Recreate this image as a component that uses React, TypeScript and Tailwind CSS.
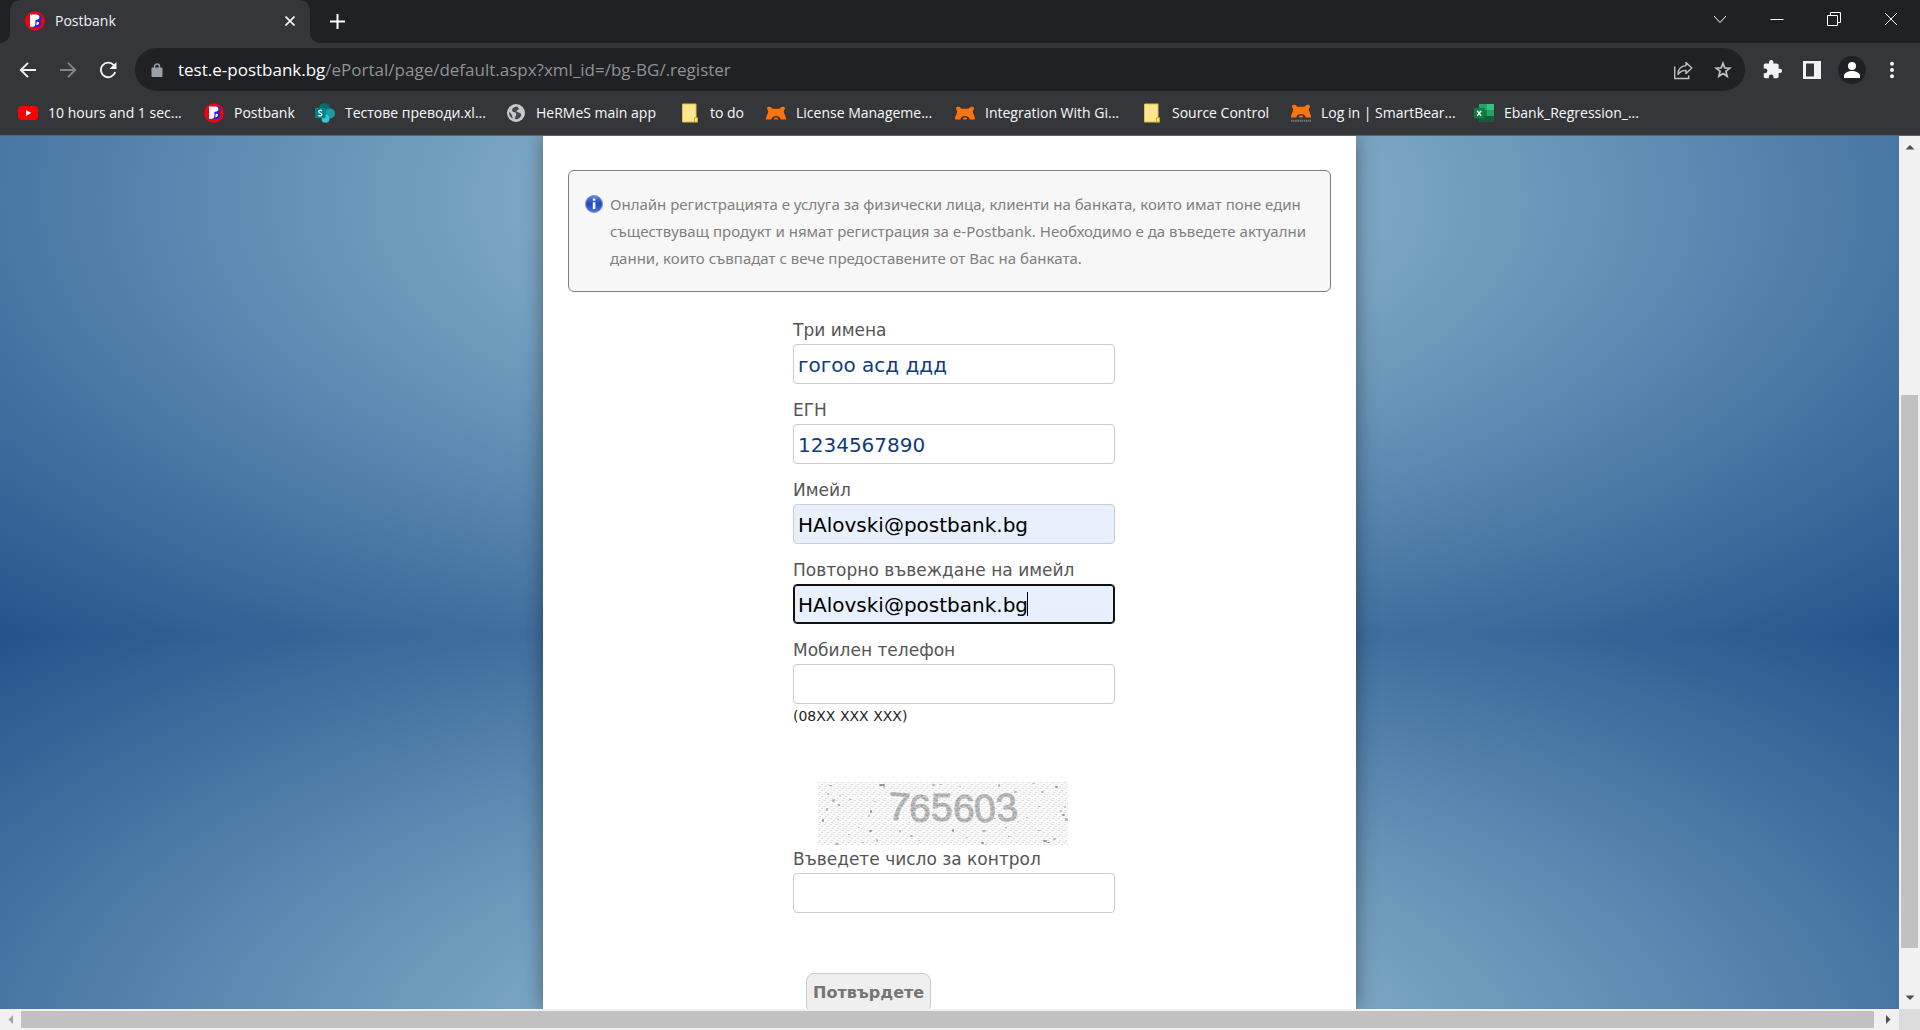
import type { ReactNode } from "react";

function PostbankIcon() {
  return (
    <svg viewBox="0 0 20 20" className="size-5 shrink-0" aria-hidden="true">
      <circle cx="10" cy="10" r="9.8" fill="#f5000c" />
      <path d="M5 3.500h8c4 0 5 4 2.300 6 2 2 .8 6.500-2.300 6.500H5z" fill="#2a24d4" />
      <path d="M5 3.600h6.600c3.400 0 3.800 4.400.9 4.900l-2.100.5v3.400c0 1.600-.8 3.400-2.200 3.400H5z" fill="#fff" />
      <path d="M11.800 10.800c2-.4 2.500.8 2 2-.4 1-1.400 1.500-2.500 1.400z" fill="#fff" />
    </svg>
  );
}

function YoutubeIcon() {
  return (
    <svg viewBox="0 0 20 20" className="size-5 shrink-0" aria-hidden="true">
      <rect x="0" y="3" width="20" height="14" rx="3.500" fill="#f00" />
      <path d="M8 7v6l5.200-3z" fill="#fff" />
    </svg>
  );
}

function SharepointIcon() {
  return (
    <svg viewBox="0 0 20 20" className="size-5 shrink-0" aria-hidden="true">
      <circle cx="9.500" cy="5.500" r="5.500" fill="#036c70" />
      <circle cx="15" cy="10.500" r="5" fill="#1a9ba1" />
      <circle cx="10.500" cy="15.800" r="4" fill="#37c6d0" />
      <rect x="0" y="4.800" width="10.500" height="10.500" rx="1" fill="#038387" />
      <path d="M7 7.700C5.800 7 3.700 7.100 3.700 8.600c0 1.700 3.200 1.200 3.200 2.900 0 1.600-2.200 1.700-3.500.9" fill="none" stroke="#fff" strokeWidth="1.300" />
    </svg>
  );
}

function GlobeIcon() {
  return (
    <svg viewBox="0 0 20 20" className="size-5 shrink-0" aria-hidden="true">
      <circle cx="10" cy="10" r="9" fill="#c6c9cd" />
      <path
        d="M11 3.500c-3 .3-5 1.800-5 3.500 0 1.600 1.400 2 2.800 2.300 1.600.4 1.700 2.200 1.100 3.200-.5 1-.6 2.600-1.300 3.600 3.400.6 6.300-1.600 6.700-4.700-.9-2-3.300-1.700-4.500-2.700-.9-.9.700-1.300 1.500-1.900 1-.8.200-2.700-1.300-3.300zM3.100 8.600c-.4 3.400 1.200 6 3.600 7-.2-1.600-.3-3-1.200-4.200-.8-1-2-1.500-2.400-2.800z"
        fill="#45474b"
      />
    </svg>
  );
}

function NoteIcon() {
  return (
    <svg viewBox="0 0 20 20" className="size-5 shrink-0" aria-hidden="true">
      <path d="M2.500 1h13.500v14l1.500 4h-15z" fill="#ffe68f" stroke="#e3bf4a" />
      <path d="M14.500 18.800v-4h3v4z" fill="#ffe68f" stroke="#d4a92c" />
    </svg>
  );
}

function BearIcon({ captioned = false }: { captioned?: boolean }) {
  return (
    <svg viewBox="0 0 20 20" className="size-5 shrink-0" aria-hidden="true">
      <g transform={captioned ? "translate(0 -2)" : undefined}>
        <path
          d="M1 5.200C1.400 3.600 4 3.300 5 4.300c.5.500.8 1.300 1.700 1.400 2.200.2 4.400.2 6.600 0 .9-.1 1.200-.9 1.700-1.400 1-1 3.600-.7 4 .9.200 1-.9 1.700-1.100 2.500-.2 1.500.3 2.600.8 3.900.6 1.600 1.300 2.900 1.300 4.900h-5.200c-.6-2.300-2.300-3.500-4.800-3.500s-4.200 1.200-4.800 3.500H0c0-2 .7-3.300 1.300-4.900.5-1.300 1-2.400.8-3.900C1.900 6.900.8 6.200 1 5.200z"
          fill="#ff730b"
        />
        <path d="M7.800 15.200c.5-1 3.900-1 4.400 0l-.8 1.300H8.600z" fill="#ff730b" />
      </g>
      {captioned && <path d="M0 17.800h20" stroke="#77777a" strokeWidth="2" strokeDasharray="1.500 .6" />}
    </svg>
  );
}

function ExcelIcon() {
  return (
    <svg viewBox="0 0 20 20" className="size-5 shrink-0" aria-hidden="true">
      <path d="M5 1h7.500v6H5z" fill="#21a366" />
      <path d="M12.500 1H20v6h-7.500z" fill="#33c481" />
      <path d="M5 7h7.500v6H5z" fill="#107c41" />
      <path d="M12.500 7H20v6h-7.500z" fill="#21a366" />
      <path d="M5 13h15v6H5z" fill="#185c37" />
      <rect x="0" y="5" width="10.500" height="10.500" rx="1" fill="#107c41" />
      <path d="M3.200 7.700l4 5.200M7.200 7.700l-4 5.200" stroke="#fff" strokeWidth="1.400" />
    </svg>
  );
}

function BackIcon() {
  return (
    <svg viewBox="0 0 18 18" className="size-[18px]" fill="none" stroke="currentColor" strokeWidth="1.900" aria-hidden="true">
      <path d="M17 9H2M9 1.800L1.800 9 9 16.200" />
    </svg>
  );
}

function ForwardIcon() {
  return (
    <svg viewBox="0 0 18 18" className="size-[18px]" fill="none" stroke="currentColor" strokeWidth="1.900" aria-hidden="true">
      <path d="M1 9h15M9 1.800L16.200 9 9 16.200" />
    </svg>
  );
}

function ReloadIcon() {
  return (
    <svg viewBox="0 0 18 18" className="size-[18px]" aria-hidden="true">
      <path d="M14.800 4.200A7.300 7.300 0 1 0 16.200 11" fill="none" stroke="currentColor" strokeWidth="1.900" />
      <path d="M17.500 1v7H10.500z" fill="currentColor" />
    </svg>
  );
}

function LockIcon() {
  return (
    <svg viewBox="0 0 20 20" className="size-5 shrink-0 text-[#9aa0a6]" aria-hidden="true">
      <rect x="4.500" y="7.500" width="11" height="9.500" rx="1" fill="currentColor" />
      <path d="M7.500 8V6.500a2.500 2.500 0 0 1 5 0V8" fill="none" stroke="currentColor" strokeWidth="1.400" />
    </svg>
  );
}

function ShareIcon() {
  return (
    <svg viewBox="0 0 20 20" className="size-5" fill="none" stroke="currentColor" strokeWidth="1.400" aria-hidden="true">
      <path d="M1.700 6.500v12h14v-3" />
      <path d="M5 14.500c.2-5.500 3-8.600 8-8.900V2.400l5.800 5.600-5.800 5.600v-3.200c-3.700 0-6 1.200-8 4.100z" strokeLinejoin="round" />
    </svg>
  );
}

function StarIcon() {
  return (
    <svg viewBox="0 0 18 18" className="size-[18px]" fill="none" stroke="currentColor" strokeWidth="1.700" aria-hidden="true">
      <path d="M9 2.200l1.800 4.700 5 .3-3.900 3.200 1.300 4.900L9 12.500l-4.200 2.800 1.300-4.900-3.900-3.200 5-.3z" />
    </svg>
  );
}

function PuzzleIcon() {
  return (
    <svg viewBox="0 0 24 24" className="size-[21px]" fill="currentColor" aria-hidden="true">
      <path d="M20.500 11H19V7c0-1.100-.9-2-2-2h-4V3.500a2.500 2.500 0 0 0-5 0V5H4c-1.100 0-2 .9-2 2v3.800h1.500a2.700 2.700 0 0 1 0 5.400H2V20c0 1.100.9 2 2 2h3.800v-1.500a2.700 2.700 0 0 1 5.400 0V22H17c1.100 0 2-.9 2-2v-4h1.500a2.500 2.500 0 0 0 0-5z" />
    </svg>
  );
}

function SidePanelIcon() {
  return (
    <svg viewBox="0 0 18 18" className="size-[18px]" fill="currentColor" aria-hidden="true">
      <path fillRule="evenodd" d="M0 0h18v18H0zM3 2.500v13h8v-13z" />
    </svg>
  );
}

function ProfileIcon() {
  return (
    <svg viewBox="0 0 28 28" className="size-7" aria-hidden="true">
      <circle cx="14" cy="14" r="14" fill="#202124" />
      <circle cx="14" cy="10" r="4" fill="#fff" />
      <path d="M6 22v-2.500C6 16.800 10.500 15 14 15s8 1.800 8 4.500V22z" fill="#fff" />
    </svg>
  );
}

function MenuDotsIcon() {
  return (
    <svg viewBox="0 0 18 18" className="size-[18px]" fill="currentColor" aria-hidden="true">
      <circle cx="9" cy="2.800" r="2" />
      <circle cx="9" cy="9" r="2" />
      <circle cx="9" cy="15.200" r="2" />
    </svg>
  );
}

function InfoIcon() {
  return (
    <svg viewBox="0 0 18 18" className="mt-1 size-[18px] shrink-0" aria-hidden="true">
      <defs>
        <linearGradient id="info-fill" x1="0" y1="0" x2="0" y2="1">
          <stop offset="0" stopColor="#5c82e0" />
          <stop offset=".5" stopColor="#2349b8" />
          <stop offset="1" stopColor="#4a74ea" />
        </linearGradient>
      </defs>
      <circle cx="9" cy="9" r="8.500" fill="url(#info-fill)" stroke="#7c95dd" />
      <path d="M7.800 3.500h2.600v2.300H7.800zM7.800 7.200h2.600V14H7.800z" fill="#fff" />
    </svg>
  );
}

const SPECKS: [number, number, number, number][] = [
  [11, 3, 3, 1], [9, 11, 2, 2], [14, 17, 3, 3], [20, 22, 2, 2], [21, 13, 2, 1], [8, 26, 2, 3], [4, 37, 2, 3], [19, 37, 2, 1],
  [31, 17, 3, 1], [61, 2, 6, 2], [65, 4, 2, 2], [56, 19, 2, 1], [52, 28, 2, 3], [50, 33, 2, 2], [40, 45, 2, 1], [51, 48, 3, 2],
  [58, 57, 2, 3], [17, 61, 4, 2], [44, 60, 2, 1], [81, 48, 2, 2], [92, 53, 3, 2], [79, 36, 2, 1], [114, 2, 3, 2], [121, 2, 3, 1],
  [134, 47, 2, 3], [141, 4, 2, 1], [164, 48, 4, 2], [163, 60, 3, 2], [167, 62, 2, 1], [180, 2, 2, 3], [187, 45, 2, 1], [199, 39, 2, 1],
  [196, 9, 3, 2], [190, 54, 2, 1], [214, 1, 3, 1], [223, 9, 3, 2], [237, 4, 3, 2], [219, 48, 4, 1], [208, 35, 2, 1], [225, 58, 4, 2],
  [235, 56, 3, 2], [242, 28, 2, 2], [244, 32, 3, 2], [247, 36, 3, 3], [246, 24, 2, 2], [220, 24, 2, 1], [100, 58, 2, 1], [148, 55, 2, 1],
  [229, 60, 3, 1], [30, 52, 2, 1], [72, 11, 2, 2], [176, 36, 2, 1],
];

function Captcha() {
  return (
    <svg viewBox="0 0 250 63" className="mt-[54px] ml-[25px] h-[63px] w-[250px]" role="img" aria-label="765603">
      <defs>
        <pattern id="grain" width="6" height="6" patternUnits="userSpaceOnUse">
          <rect width="6" height="6" fill="#f9f9f9" />
          <path d="M0 0h2v1H0zM3 2h2v1H3zM1 4h2v1H1z" fill="#e2e2e2" />
          <path d="M4 5h1v1H4zM5 0h1v1H5z" fill="#ececec" />
        </pattern>
        <pattern id="ink" width="5" height="5" patternUnits="userSpaceOnUse">
          <rect width="5" height="5" fill="#b4b4b4" />
          <path d="M0 1h2v1H0zM3 3h2v1H3z" fill="#9c9c9c" />
          <path d="M2 0h2v1H2zM0 4h2v1H0z" fill="#cbcbcb" />
        </pattern>
      </defs>
      <rect width="250" height="63" fill="url(#grain)" />
      {SPECKS.map(([x, y, w, h], i) => (
        <rect key={i} x={x} y={y} width={w} height={h} rx="1" fill={i % 3 ? "#b8b8b8" : "#989898"} />
      ))}
      <g fill="url(#ink)" stroke="url(#ink)" strokeWidth="1" fontFamily="'Liberation Sans', sans-serif" fontSize="39">
        <text x="70" y="38" transform="rotate(5 80 25)">7</text>
        <text x="91" y="40">6</text>
        <text x="113" y="39">5</text>
        <text x="135" y="40">6</text>
        <text x="156" y="40" transform="rotate(-6 166 26)">0</text>
        <text x="178" y="39" transform="rotate(-6 188 26)">3</text>
      </g>
    </svg>
  );
}

const BOOKMARKS: { label: string; icon: ReactNode; width: string }[] = [
  { label: "10 hours and 1 sec...", icon: <YoutubeIcon />, width: "w-[186px]" },
  { label: "Postbank", icon: <PostbankIcon />, width: "w-[111px]" },
  { label: "Тестове преводи.xl...", icon: <SharepointIcon />, width: "w-[191px]" },
  { label: "HeRMeS main app", icon: <GlobeIcon />, width: "w-[174px]" },
  { label: "to do", icon: <NoteIcon />, width: "w-[86px]" },
  { label: "License Manageme...", icon: <BearIcon />, width: "w-[189px]" },
  { label: "Integration With Gi...", icon: <BearIcon />, width: "w-[187px]" },
  { label: "Source Control", icon: <NoteIcon />, width: "w-[149px]" },
  { label: "Log in | SmartBear...", icon: <BearIcon captioned />, width: "w-[183px]" },
  { label: "Ebank_Regression_...", icon: <ExcelIcon />, width: "w-[186px]" },
];

function ToolButton({ label, children }: { label: string; children: ReactNode }) {
  return (
    <button type="button" aria-label={label} className="flex h-10 w-10 shrink-0 items-center justify-center">
      {children}
    </button>
  );
}

function WindowButton({ label, children }: { label: string; children: ReactNode }) {
  return (
    <button type="button" aria-label={label} className="flex h-[37px] w-[57px] items-center justify-center text-white">
      <svg viewBox="0 0 14 14" className="size-3.5" fill="none" stroke="currentColor" strokeWidth="1" aria-hidden="true">
        {children}
      </svg>
    </button>
  );
}

function TabStrip() {
  return (
    <div className="flex h-[43px] bg-[#202124] pl-2.5">
      <div className="relative flex w-[300px] items-center rounded-t-[10px] bg-[#35363a] pr-3 pb-px pl-[15px] text-[#f1f3f4]">
        <span className="absolute bottom-0 -left-2.5 size-2.5 bg-[radial-gradient(circle_at_0_0,#202124_10px,#35363a_10px)]" />
        <span className="absolute -right-2.5 bottom-0 size-2.5 bg-[radial-gradient(circle_at_100%_0,#202124_10px,#35363a_10px)]" />
        <PostbankIcon />
        <span className="ml-2.5 flex-1 text-sm">Postbank</span>
        <button type="button" aria-label="Close tab" className="flex size-4 items-center justify-center">
          <svg viewBox="0 0 10 10" className="size-2.5" stroke="currentColor" strokeWidth="1.700" aria-hidden="true">
            <path d="M.5.500l9 9M9.500.500l-9 9" />
          </svg>
        </button>
      </div>
      <button type="button" aria-label="New tab" className="ml-3 flex w-[30px] items-center justify-center text-white">
        <svg viewBox="0 0 15 15" className="size-[15px]" stroke="currentColor" strokeWidth="2" aria-hidden="true">
          <path d="M7.500 0v15M0 7.500h15" />
        </svg>
      </button>
      <div className="ml-auto flex pr-px">
        <WindowButton label="Search tabs">
          <path d="M1 4l6 6.500L13 4" />
        </WindowButton>
        <WindowButton label="Minimize">
          <path d="M.5 7.500h13" />
        </WindowButton>
        <WindowButton label="Restore">
          <path d="M.5 3.500h10v10H.5zM3.500 3V.500h10v10H11" />
        </WindowButton>
        <WindowButton label="Close">
          <path d="M1 1l12 12M13 1L1 13" />
        </WindowButton>
      </div>
    </div>
  );
}

function Toolbar() {
  return (
    <div className="flex h-[53px] items-center bg-[#35363a] px-2 text-[#f1f3f4]">
      <ToolButton label="Back"><BackIcon /></ToolButton>
      <button type="button" aria-label="Forward" disabled className="flex h-10 w-10 items-center justify-center text-[#85868a]">
        <ForwardIcon />
      </button>
      <ToolButton label="Reload"><ReloadIcon /></ToolButton>
      <div className="mx-[7px] flex h-[43px] min-w-0 flex-1 items-center rounded-full bg-[#202124] pr-0.5 pl-3 text-[#bdc1c6]">
        <LockIcon />
        <a href="#address" className="ml-[11px] flex-1 truncate text-[17px] leading-6 text-[#909295]">
          <span className="text-white">test.e-postbank.bg</span>/ePortal/page/default.aspx?xml_id=/bg-BG/.register
        </a>
        <ToolButton label="Share"><ShareIcon /></ToolButton>
        <ToolButton label="Bookmark this page"><StarIcon /></ToolButton>
      </div>
      <ToolButton label="Extensions"><PuzzleIcon /></ToolButton>
      <ToolButton label="Side panel"><SidePanelIcon /></ToolButton>
      <ToolButton label="Profile"><ProfileIcon /></ToolButton>
      <ToolButton label="Menu"><MenuDotsIcon /></ToolButton>
    </div>
  );
}

function BookmarksBar() {
  return (
    <nav aria-label="Bookmarks" className="flex h-10 items-center overflow-hidden border-b border-[#5f6063] bg-[#35363a] pb-[5px] pl-[18px] text-sm text-[#f8f9fa]">
      {BOOKMARKS.map((b, i) => (
        <a key={i} href="#bookmark" className={`flex shrink-0 items-center gap-2.5 whitespace-nowrap ${b.width}`}>
          {b.icon}
          {b.label}
        </a>
      ))}
    </nav>
  );
}

const INPUT_BASE = "block h-10 w-full rounded border px-1 pt-0.5 text-xl outline-none";

function Label({ id, children }: { id: string; children: ReactNode }) {
  return (
    <label htmlFor={id} className="mb-1 block text-[17px] leading-5 text-[#555]">
      {children}
    </label>
  );
}

function RegistrationForm() {
  return (
    <form className="mt-7 ml-[225px] w-[322px]">
      <div className="flex flex-col gap-4">
        <div>
          <Label id="names">Три имена</Label>
          <input id="names" type="text" defaultValue="гогоо асд ддд" className={`${INPUT_BASE} border-[#ccc] bg-white text-[#123a7c]`} />
        </div>
        <div>
          <Label id="egn">ЕГН</Label>
          <input id="egn" type="text" defaultValue="1234567890" className={`${INPUT_BASE} border-[#ccc] bg-white text-[#123a7c]`} />
        </div>
        <div>
          <Label id="email">Имейл</Label>
          <input id="email" type="email" defaultValue="HAlovski@postbank.bg" className={`${INPUT_BASE} border-[#ccc] bg-[#e8f0fe] text-black`} />
        </div>
        <div>
          <Label id="email-repeat">Повторно въвеждане на имейл</Label>
          <div className="relative">
            <input
              id="email-repeat"
              type="email"
              defaultValue="HAlovski@postbank.bg"
              className={`${INPUT_BASE} border-[#101010] bg-[#e8f0fe] text-black inset-ring inset-ring-[#101010]`}
            />
            <span className="absolute top-2 left-[234px] h-6 w-px bg-black" />
          </div>
        </div>
        <div>
          <Label id="phone">Мобилен телефон</Label>
          <input id="phone" type="tel" aria-describedby="phone-hint" className={`${INPUT_BASE} border-[#ccc] bg-white text-[#123a7c]`} />
        </div>
      </div>
      <p id="phone-hint" className="text-sm leading-6 text-[#222]">(08XX XXX XXX)</p>
      <Captcha />
      <div className="mt-1">
        <Label id="control">Въведете число за контрол</Label>
        <input id="control" type="text" className={`${INPUT_BASE} border-[#ccc] bg-white text-[#123a7c]`} />
      </div>
      <button type="button" className="mt-15 ml-[13px] h-10 rounded-lg border border-[#ccc] bg-[#efefef] px-1.5 text-base font-bold text-[#757575]">
        Потвърдете
      </button>
    </form>
  );
}

function Page() {
  return (
    <main className="min-w-0 flex-1 overflow-hidden bg-[radial-gradient(ellipse_at_center,#a4cddd,#22538c)] bg-[length:100%_872px] bg-[position:0_-373px] bg-repeat-y font-['DejaVu_Sans',sans-serif]">
      <div className="mx-auto h-full w-[813px] overflow-hidden bg-white px-[25px] pt-[34px] shadow-[0_0_20px_rgba(0,0,0,0.4)]">
        <div className="flex h-[122px] gap-[7px] rounded-md border border-[#808080] bg-[#f7f7f7] pt-5 pl-4">
          <InfoIcon />
          <p className="font-['Noto_Sans',sans-serif] text-[15px] leading-[27px] whitespace-nowrap text-[#808080]">
            Онлайн регистрацията е услуга за физически лица, клиенти на банката, които имат поне един
            <br />
            съществуващ продукт и нямат регистрация за e-Postbank. Необходимо е да въведете актуални
            <br />
            данни, които съвпадат с вече предоставените от Вас на банката.
          </p>
        </div>
        <RegistrationForm />
      </div>
    </main>
  );
}

function VerticalScrollbar() {
  return (
    <div className="flex w-[21px] shrink-0 flex-col items-center bg-[#f1f1f1]">
      <svg viewBox="0 0 20 20" className="size-5 shrink-0" aria-hidden="true"><path d="M5.500 13.500L10 9l4.500 4.500z" fill="#505050" /></svg>
      <div className="flex-[239]" />
      <div className="w-[17px] flex-[553] bg-[#c1c1c1]" />
      <div className="flex-[41]" />
      <svg viewBox="0 0 20 20" className="size-5 shrink-0" aria-hidden="true"><path d="M5.500 6.500L10 11l4.500-4.500z" fill="#505050" /></svg>
    </div>
  );
}

function HorizontalScrollbar() {
  return (
    <div className="flex h-[21px] shrink-0 items-center bg-[#f1f1f1]">
      <svg viewBox="0 0 21 21" className="size-[21px] shrink-0" aria-hidden="true"><path d="M13 6v9l-4.500-4.500z" fill="#a3a3a3" /></svg>
      <div className="h-[17px] flex-1 bg-[#c1c1c1]" />
      <svg viewBox="0 0 25 21" className="h-[21px] w-[25px] shrink-0" aria-hidden="true"><path d="M12 6v9l4.500-4.500z" fill="#505050" /></svg>
      <div className="h-[21px] w-[21px] shrink-0 bg-[#dcdcdc]" />
    </div>
  );
}

export default function App() {
  return (
    <div className="flex h-screen flex-col overflow-hidden font-['Open_Sans',sans-serif]">
      <header className="shrink-0">
        <TabStrip />
        <Toolbar />
        <BookmarksBar />
      </header>
      <div className="flex min-h-0 flex-1">
        <Page />
        <VerticalScrollbar />
      </div>
      <HorizontalScrollbar />
    </div>
  );
}
